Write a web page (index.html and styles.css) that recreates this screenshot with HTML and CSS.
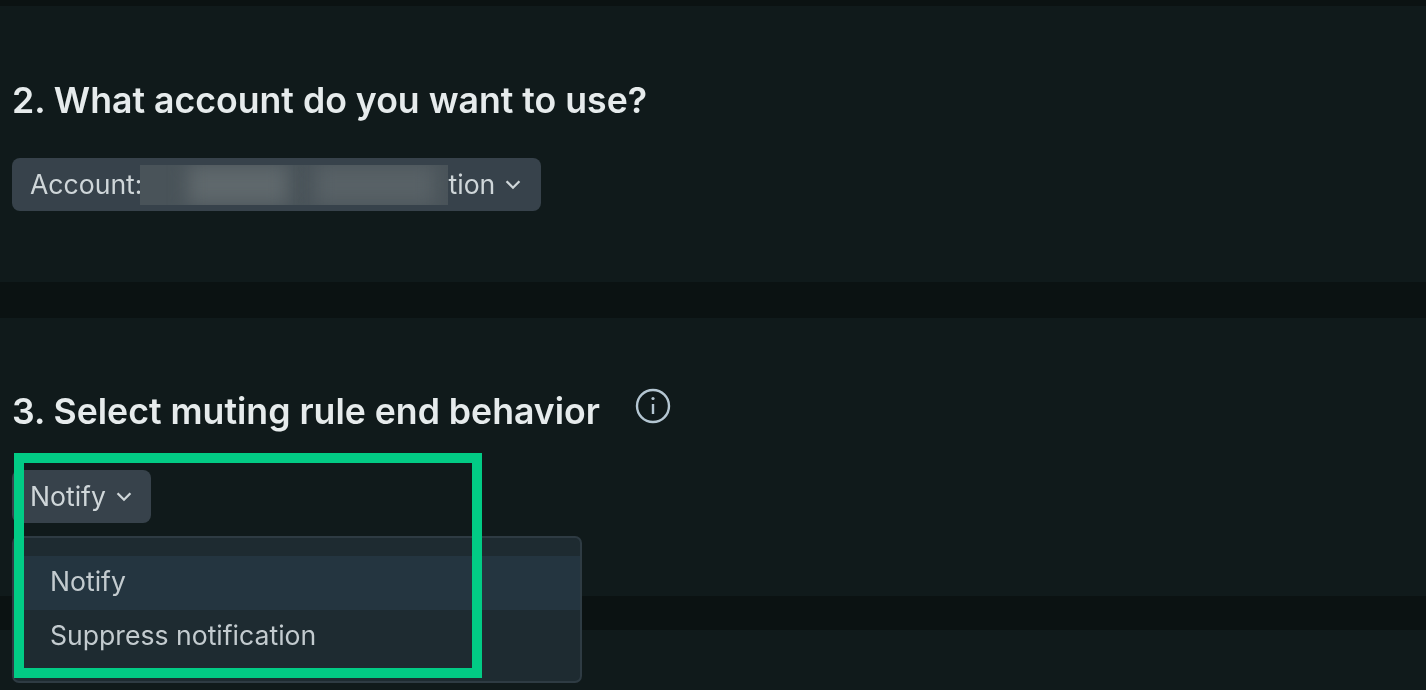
FILE: index.html
```html
<!DOCTYPE html>
<html lang="en">
<head>
  <meta charset="UTF-8" />
  <title>Muting rule settings</title>
  <link rel="stylesheet" href="styles.css">
</head>
<body>
  <div class="page">
    <section class="card card-account">
      <h2>2. What account do you want to use?</h2>
      <button class="select select-account">
        <span>Account:</span>
        <span class="redacted"><i class="smudge smudge-a"></i><i class="smudge smudge-b"></i></span>
        <span>tion</span>
        <svg class="chevron" viewBox="0 0 14 10"><path d="M2 2.5 L7 7.5 L12 2.5" /></svg>
      </button>
    </section>

    <section class="card card-behavior">
      <div class="title-row">
        <h2>3. Select muting rule end behavior</h2>
        <svg class="info" viewBox="0 0 36 36">
          <circle cx="18" cy="18" r="16" />
          <path d="M18 16 V26" />
          <circle class="info-dot" cx="18" cy="10.5" r="1.6" />
        </svg>
      </div>
      <div class="select-wrap">
        <button class="select select-end">
          <span>Notify</span>
          <svg class="chevron" viewBox="0 0 14 10"><path d="M2 2.5 L7 7.5 L12 2.5" /></svg>
        </button>
        <div class="menu">
          <div class="menu-item active"><span>Notify</span></div>
          <div class="menu-item"><span>Suppress notification</span></div>
        </div>
        <div class="highlight"></div>
      </div>
    </section>

    <section class="card card-next"></section>
  </div>
</body>
</html>
```

FILE: styles.css
```css
* {
  box-sizing: border-box;
}

html, body {
  height: 100%;
}

body {
  margin: 0;
  background-color: #0b1212;
  color: #e6ebec;
  font-family: Inter, "Liberation Sans", sans-serif;
  overflow: hidden;
}

.page {
  display: flex;
  flex-direction: column;
  height: 690px;
  padding-top: 6px;
}

.card {
  background-color: #101a1b;
  padding: 0 12px;
}

.card-account {
  height: 276px;
  padding-top: 73px;
}

.card-behavior {
  height: 278px;
  margin-top: 36px;
  padding-top: 72px;
}

.card-next {
  flex: 1;
  margin-top: 34px;
}

h2 {
  margin: 0;
  font-size: 35.65px;
  line-height: 42px;
  font-weight: 600;
  filter: blur(0.6px);
}

.title-row {
  display: flex;
  align-items: flex-start;
  gap: 35px;
}

.info {
  width: 36px;
  height: 36px;
  margin-top: -2px;
  fill: none;
  stroke: #b4c6d2;
  stroke-width: 2.4;
  filter: blur(0.4px);
}

.info-dot {
  fill: #b4c6d2;
  stroke: none;
}

.select {
  display: flex;
  align-items: center;
  height: 53px;
  margin-top: 37px;
  padding: 0 18px;
  border: 0;
  border-radius: 8px;
  background-color: #37424b;
  color: #cfd6d9;
  font-family: inherit;
  font-size: 26.6px;
}

.select > span {
  margin-top: -2px;
  filter: blur(0.5px);
}

.select-account {
  width: 529px;
}

.select-end {
  width: 139px;
  margin-top: 0;
}

.select > .redacted {
  position: relative;
  flex-shrink: 0;
  overflow: hidden;
  width: 308px;
  height: 40px;
  margin-top: 0;
  margin-left: -2px;
  background-color: #495359;
  filter: none;
}

.smudge {
  position: absolute;
  top: 0;
  height: 40px;
  background-color: #5f686c;
  filter: blur(9px);
}

.smudge-a {
  left: 48px;
  width: 100px;
}

.smudge-b {
  left: 175px;
  width: 120px;
  background-color: #586166;
}

.chevron {
  width: 18px;
  height: 13px;
  margin-left: 9px;
  fill: none;
  stroke: #cfd6d9;
  stroke-width: 1.8;
}

.select-wrap {
  position: relative;
  margin-top: 38px;
}

.menu {
  position: absolute;
  z-index: 2;
  top: 66px;
  left: 0;
  width: 570px;
  height: 147px;
  padding: 18px 0 0;
  border: 2px solid #2e3b43;
  border-radius: 7px;
  background-color: #1e2b31;
  color: #c3cbcf;
  font-size: 26.6px;
}

.menu-item {
  height: 54px;
  padding-left: 36px;
  line-height: 51px;
}

.menu-item span {
  filter: blur(0.5px);
}

.menu-item.active {
  background-color: #243540;
}

.highlight {
  position: absolute;
  z-index: 3;
  top: -17px;
  left: 2px;
  width: 468px;
  height: 225px;
  border: 10px solid #02cb85;
}
```
